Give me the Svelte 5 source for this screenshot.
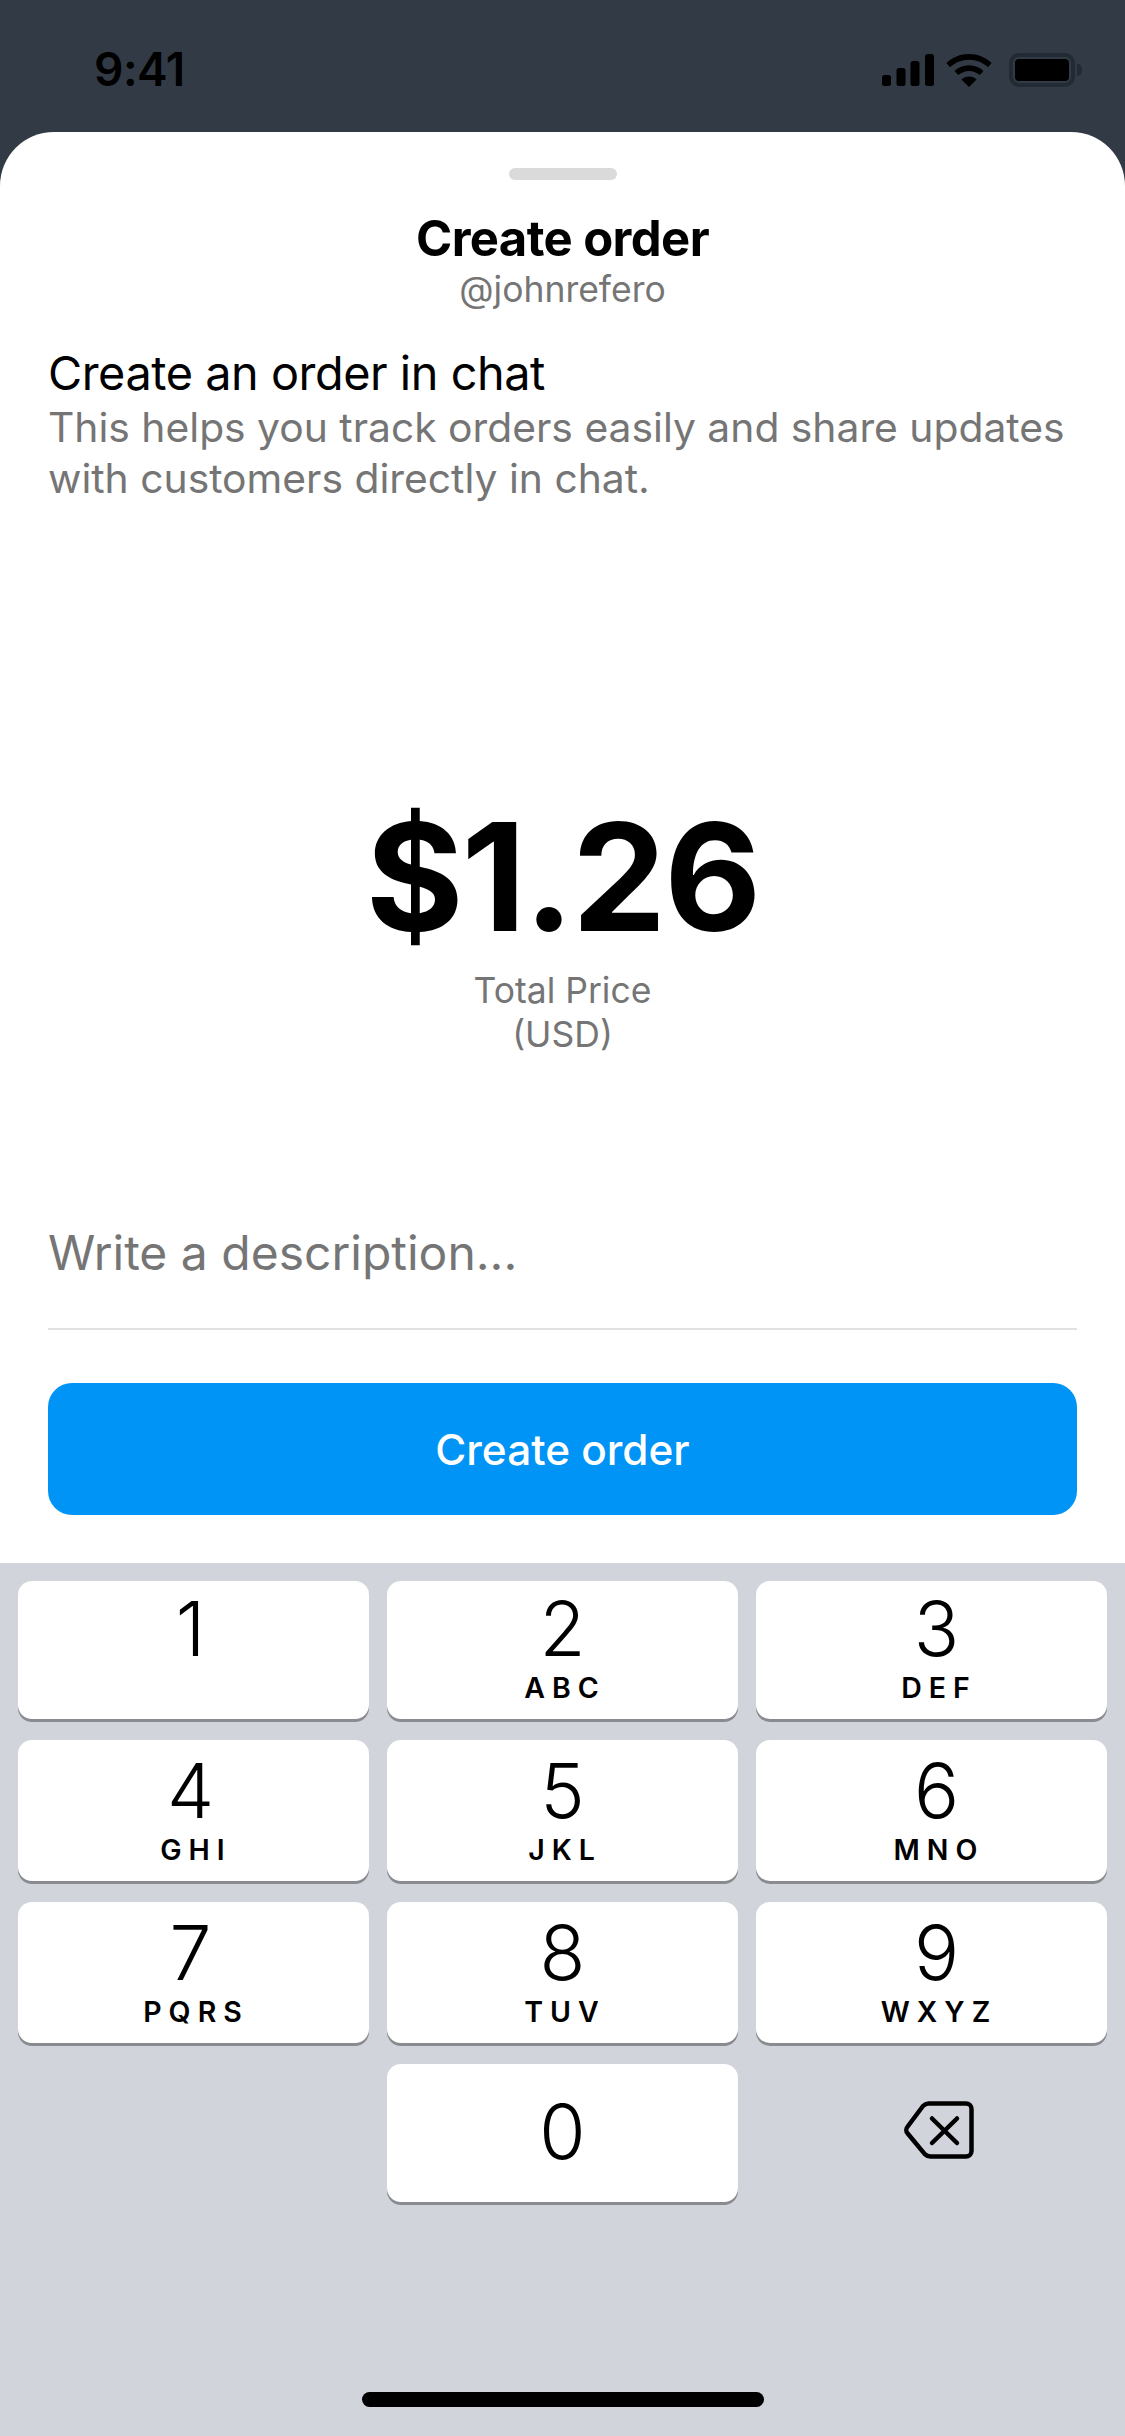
<script>
  const keys = [
    ['1', ''], ['2', 'ABC'], ['3', 'DEF'],
    ['4', 'GHI'], ['5', 'JKL'], ['6', 'MNO'],
    ['7', 'PQRS'], ['8', 'TUV'], ['9', 'WXYZ']
  ];
</script>

<div class="phone">
  <header class="status">
    <span class="time">9:41</span>
    <div class="indicators">
      <svg width="52" height="32" viewBox="0 0 52 32" aria-hidden="true">
        <rect x="0" y="21" width="9" height="11" rx="2.5" />
        <rect x="14.5" y="14" width="9" height="18" rx="2.5" />
        <rect x="28.5" y="7" width="9" height="25" rx="2.5" />
        <rect x="43" y="0" width="9" height="32" rx="2.5" />
      </svg>
      <svg width="46" height="33" viewBox="0 0 46 33" aria-hidden="true">
        <path d="M23 0C14.2 0 6.3 3.4 .4 9l3.6 4.2C9 8.6 15.700 5.700 23 5.700S37 8.600 42 13.200L45.600 9C39.700 3.400 31.800 0 23 0Z" />
        <path d="M23 11.300c-5.600 0-10.700 2.100-14.500 5.600l3.700 4.200c2.800-2.600 6.600-4.200 10.800-4.200s8 1.600 10.800 4.200l3.700-4.200C33.700 13.400 28.600 11.300 23 11.300Z" />
        <path d="M23 22.500c-3 0-5.600 1.100-7.600 2.900L23 33l7.600-7.600c-2-1.800-4.600-2.900-7.600-2.900Z" />
      </svg>
      <div class="battery"><span class="cell"></span><span class="nub"></span></div>
    </div>
  </header>

  <main class="sheet">
    <div class="handle"></div>
    <h1>Create order</h1>
    <p class="handle-name">@johnrefero</p>

    <section class="intro">
      <h2>Create an order in chat</h2>
      <p>This helps you track orders easily and share updates with customers directly in chat.</p>
    </section>

    <section class="price">
      <div class="amount">$1.26</div>
      <div class="caption">Total Price<br />(USD)</div>
    </section>

    <div class="description">Write a description...</div>
    <button class="cta">Create order</button>
  </main>

  <section class="keyboard">
    <div class="grid">
      {#each keys as [n, l]}
        <div class="key"><span class="num">{n}</span><span class="letters">{l}</span></div>
      {/each}
      <div class="blank"></div>
      <div class="key zero"><span class="num">0</span></div>
      <div class="blank del">
        <svg width="70" height="58" viewBox="0 0 70 58" fill="none" stroke="#000" aria-hidden="true">
          <path d="M24.500 2.500H62a5.500 5.500 0 0 1 5.500 5.500v42a5.500 5.500 0 0 1-5.500 5.500H26.500a8 8 0 0 1-5.700-2.400L3.700 32.500a5 5 0 0 1 0-7L19 5a8 8 0 0 1 5.500-2.500Z" stroke-width="4.500" stroke-linejoin="round" />
          <path d="M28 17.500 53 42M53 17.500 28 42" stroke-width="4.500" stroke-linecap="round" />
        </svg>
      </div>
    </div>
    <div class="home"></div>
  </section>
</div>

<style>
  :global(body) {
    margin: 0;
    background: #fff;
  }

  .phone {
    width: 1125px;
    height: 2436px;
    display: flex;
    flex-direction: column;
    overflow: hidden;
    background: #323b45;
    font-family: Inter, "Liberation Sans", sans-serif;
    color: #000;
  }

  .status {
    height: 132px;
    flex: none;
    display: flex;
    justify-content: space-between;
    align-items: flex-start;
    padding: 44px 43px 0 94px;
    box-sizing: border-box;
  }

  .time {
    font-size: 46px;
    line-height: 50px;
    font-weight: 600;
    letter-spacing: -0.5px;
  }

  .indicators {
    display: flex;
    align-items: center;
    gap: 12.5px;
    padding-top: 9px;
  }

  .battery {
    width: 66px;
    height: 34px;
    box-sizing: border-box;
    border: 4px solid #222a33;
    border-radius: 10px;
    padding: 2px;
    position: relative;
    margin: 0 7px 0 4.5px;
  }

  .cell {
    display: block;
    height: 100%;
    background: #000;
    border-radius: 4px;
  }

  .nub {
    position: absolute;
    right: -11px;
    top: 7px;
    width: 5px;
    height: 12px;
    background: #222a33;
    border-radius: 0 6px 6px 0;
  }

  .sheet {
    height: 1431px;
    flex: none;
    background: #fff;
    border-radius: 54px 54px 0 0;
    box-sizing: border-box;
    padding: 36px 48px 0;
    display: flex;
    flex-direction: column;
  }

  .handle {
    width: 108px;
    height: 12px;
    flex: none;
    align-self: center;
    background: #dadada;
    border-radius: 6px;
  }

  h1 {
    margin: 29px 0 0;
    text-align: center;
    font-size: 49px;
    line-height: 60px;
    font-weight: 700;
    letter-spacing: -0.6px;
  }

  .handle-name {
    margin: 1px 0 0;
    text-align: center;
    font-size: 35.5px;
    line-height: 40px;
    color: #757575;
  }

  .intro {
    margin-top: 35px;
  }

  h2 {
    margin: 0;
    font-size: 46.8px;
    line-height: 57px;
    font-weight: 400;
    letter-spacing: -0.45px;
  }

  .intro p {
    margin: 0;
    font-size: 40.8px;
    line-height: 51px;
    color: #757575;
    width: 1040px;
  }

  .price {
    margin-top: 288px;
    text-align: center;
  }

  .amount {
    font-size: 149.5px;
    line-height: 170px;
    font-weight: 700;
    letter-spacing: -2px;
  }

  .caption {
    margin-top: 7px;
    font-size: 35.5px;
    line-height: 44px;
    color: #757575;
  }

  .description {
    margin-top: 169px;
    height: 102px;
    flex: none;
    border-bottom: 2px solid #e1e1e1;
    font-size: 48px;
    line-height: 54px;
    color: #757575;
  }

  .cta {
    margin-top: 53px;
    height: 132px;
    flex: none;
    border: 0;
    border-radius: 24px;
    background: #0094f6;
    color: #fff;
    font-family: inherit;
    font-size: 42.3px;
    font-weight: 550;
  }

  .keyboard {
    flex: 1;
    background: #d1d4db;
    padding: 18px 18px 0;
    display: flex;
    flex-direction: column;
  }

  .grid {
    display: grid;
    grid-template-columns: repeat(3, 351px);
    grid-template-rows: 138px 141px 141px 138px;
    column-gap: 18px;
    row-gap: 21px;
  }

  .key {
    background: #fff;
    border-radius: 14px;
    box-shadow: 0 3px 0 #8a8b90;
    display: flex;
    flex-direction: column;
    align-items: center;
  }

  .key:nth-child(3n + 1) .num {
    margin-right: 6px;
  }

  .key:nth-child(3n) .num,
  .key:nth-child(3n) .letters {
    margin-left: 10px;
  }

  .key:nth-child(n + 4) .num {
    margin-top: 9px;
  }

  .num {
    font-size: 75px;
    line-height: 84px;
    margin-top: 6px;
    font-weight: 350;
  }

  .letters {
    font-size: 28.5px;
    line-height: 32px;
    font-weight: 600;
    letter-spacing: 7px;
    margin-right: -5px;
    margin-top: 1px;
  }

  .key.zero .num {
    margin-top: 26px;
  }

  .del {
    display: flex;
    justify-content: center;
    align-items: center;
    padding: 0 0 6px 15px;
  }

  .home {
    width: 402px;
    height: 15px;
    flex: none;
    margin: 190px auto 0;
    background: #000;
    border-radius: 8px;
  }
</style>
